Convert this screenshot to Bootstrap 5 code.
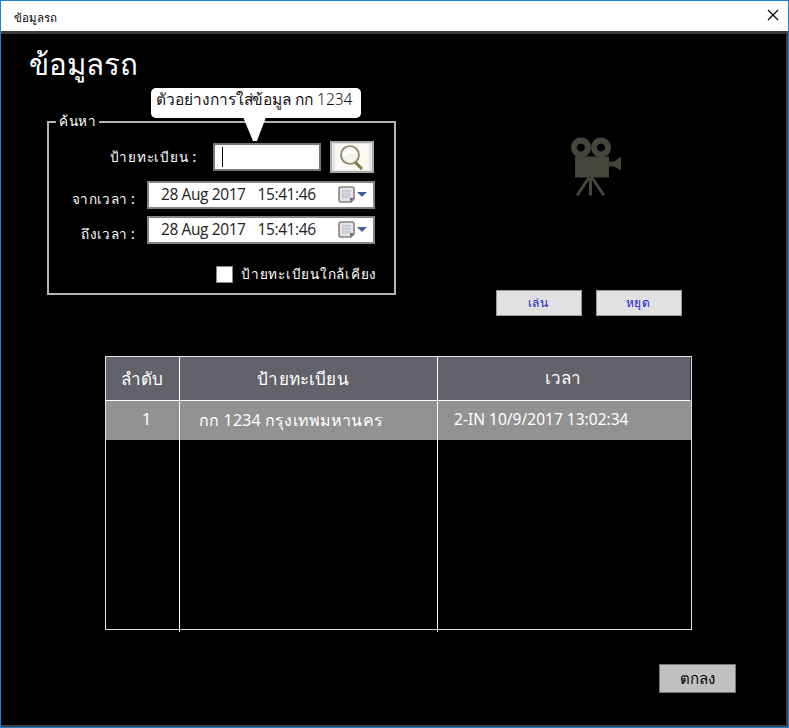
<!DOCTYPE html>
<html lang="th">
<head>
<meta charset="utf-8">
<meta name="viewport" content="width=device-width, initial-scale=1">
<title>ข้อมูลรถ</title>
<link href="https://cdn.jsdelivr.net/npm/bootstrap@5.3.0/dist/css/bootstrap.min.css" rel="stylesheet">
<style>
body{font-family:"Noto Sans",sans-serif;background:#000;color:#fff;line-height:1}
.win{width:789px;height:728px;border:1px solid #1c80d0;overflow:hidden}
.title-bar{height:30px;background:#fff;color:#000;font-size:11.5px;padding:3px 9px 0 13px}
.client{height:696px;border:solid #3c3c3c;border-width:3px 2px 2px 0;background:#000}
.heading{height:87px;padding:11px 0 0 28px;font-size:29.5px;line-height:38px;margin:0;font-weight:500}
.upper{height:235px}
.group{width:349px;height:174px;border:2px solid #b4b4b4;margin-left:46px;font-size:13.5px;font-weight:500}
.group-title{left:7px;top:-11px;padding:0 3px;background:#000;font-size:13.5px;letter-spacing:.5px;line-height:18px}
.bubble{left:102px;top:-35px;width:210px;height:30px;background:#fff;color:#111;border-radius:5px;font-size:15.5px;line-height:22px;padding-left:5px;z-index:2;font-weight:300;letter-spacing:-.05px}
.bubble svg{left:92px;top:29px}
.line-a{height:33px;margin-top:17px}
.line-b{height:35px}
.lbl{text-align:right;line-height:20px;letter-spacing:.3px}
.lbl-wide{width:148px;letter-spacing:.75px}
.lbl-narrow{width:86px}
.plate{width:108px;height:28px;border:2px solid #777;background:#fff;padding:2px 0 0 7px}
.caret{width:1px;height:20px;background:#000}
.find{width:44px;height:32px;border:2px solid #aaa;background:#e5e5e5;margin-left:9px}
.picker{width:228px;height:28px;border:2px solid #858585;background:#fff;color:#222;font-family:"Open Sans",sans-serif;font-size:15.5px;letter-spacing:-.4px;padding:0 5px 0 12px;font-weight:400;margin-right:19px}
.picker-text{line-height:20px;padding-bottom:1px}
.chk{width:17px;height:17px;border:1px solid #888;background:#fff}
.near{padding-top:17px;margin-right:17px}
.near-text{letter-spacing:.75px;line-height:20px}
.media{width:186px;margin-left:100px;padding-top:15px}
.media svg{margin-left:74px}
.act{width:86px;height:26px;border:1px solid #999;background:#e1e1e1;color:#2020cc;font-size:12px;font-weight:500;letter-spacing:.5px;line-height:24px;text-align:center;border-radius:0;padding:0 2px 0 0}
.media-actions{margin-top:92px;gap:14px}
.records{width:587px;height:274px;border:1px solid #e6e0f5;margin-left:104px;font-size:17px}
.c1{width:74px}.c2{width:258px}.c3{width:253px}
.c1,.c2{border-right:1px solid #fff}
.c1,.c2{height:275px}
.head-cell{height:44px;background:#62626b;border-bottom:1px solid #fff;text-align:center;line-height:44px;padding-right:2px}
.c2 .head-cell{padding-right:11px;letter-spacing:.15px}
.c3 .head-cell{border-right:1px solid #29292f;line-height:42px}
.data-cell{height:39px;background:#929292;line-height:38px;white-space:nowrap}
.c1 .data-cell{line-height:35px}
.c2 .data-cell{font-size:16px;padding-left:19px;letter-spacing:.15px}
.c3 .data-cell{font-size:15.5px;line-height:37px;letter-spacing:.02px}
.confirm{width:77px;height:29px;margin:34px 0 0 658px;border:1px solid #777;background:#c1c1c1;color:#000;font-size:15px;font-weight:500;line-height:27px;padding:0;border-radius:0}
</style>
</head>
<body>
<div class="win">
  <header class="title-bar d-flex justify-content-between"><span class="pt-2">ข้อมูลรถ</span>
    <svg class="mt-1" width="12" height="14" viewBox="0 0 12 14" stroke="#000" stroke-width="1.2"><path d="M1 2L11 12M11 2L1 12"/></svg>
  </header>
  <main class="client">
    <h1 class="heading">ข้อมูลรถ</h1>
    <div class="upper d-flex">
      <section class="group position-relative flex-shrink-0">
        <div class="group-title position-absolute">ค้นหา</div>
        <div class="bubble position-absolute text-nowrap"><span>ตัวอย่างการใส่ข้อมูล กก 1234</span>
          <svg class="position-absolute" width="24" height="25" viewBox="0 0 24 25"><path d="M0 0H23L14 24H10Z" fill="#fff"/></svg>
        </div>
        <div class="line-a d-flex align-items-center">
          <div class="lbl lbl-wide">ป้ายทะเบียน :</div>
          <div class="plate ms-3"><div class="caret"></div></div>
          <div class="find d-flex align-items-center justify-content-center">
            <svg width="36" height="26" viewBox="0 0 36 26"><path fill="#faf9f2" d="M1 0h34v26H1z"/><circle cx="16" cy="11" r="9" fill="#f3f3e8" stroke="#87835f" stroke-width="1.7"/><path d="M10 12Q15 4 21 9" fill="none" stroke="#fff" stroke-width="3"/><path d="M21 18L28 25" stroke="#807b48" stroke-width="3"/></svg>
          </div>
        </div>
        <div class="line-b d-flex align-items-center mt-1">
          <div class="lbl lbl-narrow pt-2">จากเวลา :</div>
          <div class="picker d-flex align-items-center ms-auto"><span class="picker-text">28 Aug 2017</span><span class="picker-text ms-2 ps-1">15:41:46</span>
            <svg class="ms-auto" width="32" height="20" viewBox="0 0 32 20"><path d="M5 2H16Q18 2 18 4V14L15 17H5Q3 17 3 15V4Q3 2 5 2Z" fill="#e5e5e8" stroke="#8b8080" stroke-width="1.6"/><path d="M6 6H15M6 9H15M6 12H15M7 5V14M10 5V14M13 5V14" stroke="#a9b5cb" stroke-width=".7"/><path d="M14 17V13H18Z" fill="#766b6b"/><path d="M21 7H31L26 12Z" fill="#3f5f98"/></svg>
          </div>
        </div>
        <div class="line-b d-flex align-items-center">
          <div class="lbl lbl-narrow pt-2">ถึงเวลา :</div>
          <div class="picker d-flex align-items-center ms-auto"><span class="picker-text">28 Aug 2017</span><span class="picker-text ms-2 ps-1">15:41:46</span>
            <svg class="ms-auto" width="32" height="20" viewBox="0 0 32 20"><path d="M5 2H16Q18 2 18 4V14L15 17H5Q3 17 3 15V4Q3 2 5 2Z" fill="#e5e5e8" stroke="#8b8080" stroke-width="1.6"/><path d="M6 6H15M6 9H15M6 12H15M7 5V14M10 5V14M13 5V14" stroke="#a9b5cb" stroke-width=".7"/><path d="M14 17V13H18Z" fill="#766b6b"/><path d="M21 7H31L26 12Z" fill="#3f5f98"/></svg>
          </div>
        </div>
        <div class="near d-flex align-items-center justify-content-end text-nowrap"><div class="chk me-2"></div><span class="near-text">ป้ายทะเบียนใกล้เคียง</span></div>
      </section>
      <section class="media">
        <svg class="d-block" width="54" height="62" viewBox="0 0 54 61"><g fill="#45453a"><path fill-rule="evenodd" d="M11 1a10 10 0 1 0 .1 0ZM11 7a4 4 0 1 1-.1 0ZM31 1a10 10 0 1 0 .1 0ZM31 7a4 4 0 1 1-.1 0Z"/><path d="M5 20H39V25H44L51 20V34L44 30H39V41H5Z"/></g><path d="M19 41L7 59M20.500 41V59M22 41L34 59" stroke="#45453a" stroke-width="3"/></svg>
        <div class="media-actions d-flex"><button class="act btn">เล่น</button><button class="act btn">หยุด</button></div>
      </section>
    </div>
    <section class="records d-flex">
      <div class="c1"><div class="head-cell">ลำดับ</div><div class="data-cell text-center ps-2">1</div></div>
      <div class="c2"><div class="head-cell">ป้ายทะเบียน</div><div class="data-cell">กก 1234 กรุงเทพมหานคร</div></div>
      <div class="c3"><div class="head-cell">เวลา</div><div class="data-cell ps-3">2-IN 10/9/2017 13:02:34</div></div>
    </section>
    <button class="confirm btn d-block">ตกลง</button>
  </main>
</div>
<script src="https://cdn.jsdelivr.net/npm/bootstrap@5.3.0/dist/js/bootstrap.bundle.min.js"></script>
</body>
</html>
